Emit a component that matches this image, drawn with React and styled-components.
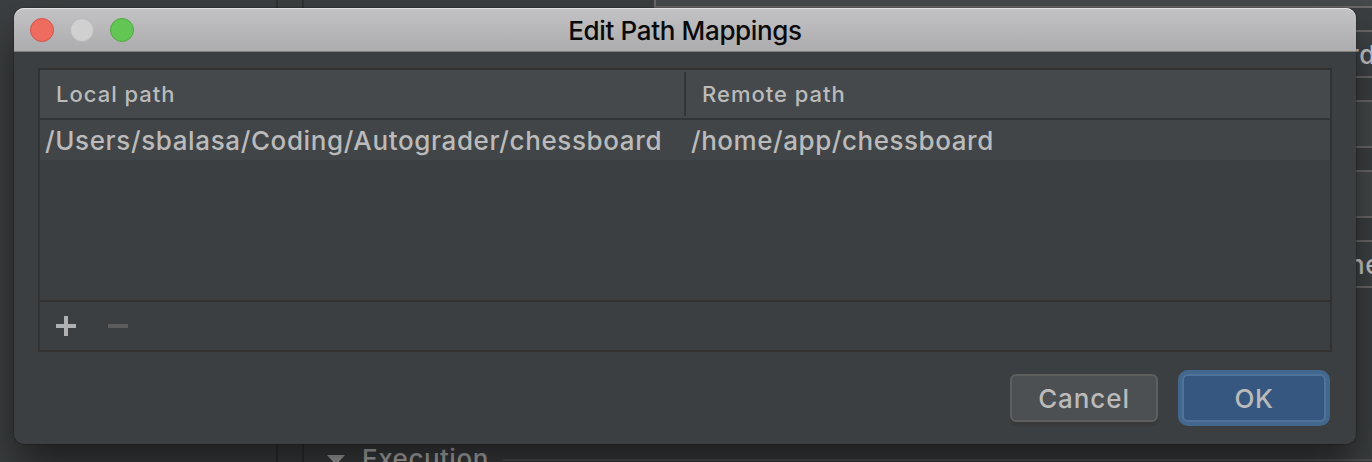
import React from "react";
import styled, { createGlobalStyle } from "styled-components";

const GlobalStyle = createGlobalStyle`
  * { box-sizing: border-box; }
  body { margin: 0; overflow: hidden; background: #3c3f41; font-family: Inter, "Liberation Sans", sans-serif; }
`;

const Screen = styled.div`
  position: relative;
  width: 1372px;
  height: 462px;
  overflow: hidden;
  background: #3c3f41;
`;

const Settings = styled.div`
  display: flex;
  height: 100%;
`;

const Sidebar = styled.div`
  width: 278px;
  border-right: 2px solid #2f3132;
`;

const Splitter = styled.div`
  width: 26px;
  border-right: 2px solid #2f3132;
`;

const Form = styled.div`
  flex: 1;
  min-width: 0;
  height: 502px;
  margin-top: -40px;
  display: flex;
  flex-direction: column;
`;

const Fields = styled.div`
  display: flex;
  flex-direction: column;
  gap: 22px;
  margin-left: 350px;
`;

const Field = styled.div`
  height: 48px;
  border: 2px solid #6a6868;
  border-right: 0;
  background: ${(p) => (p.$bright ? "#45494a" : "#3e4244")};
  color: #c8c8c8;
  font-size: 26px;
  font-weight: 450;
  line-height: 46px;
  letter-spacing: 0.6px;
  padding-left: ${(p) => p.$indent || 0}px;
  white-space: nowrap;
`;

const Section = styled.div`
  display: flex;
  align-items: center;
  height: 34px;
  margin: 154px 0 0 23px;
  color: #bbbbbb;
  font-size: 26px;
  font-weight: 450;
  line-height: 34px;
  letter-spacing: 0.5px;

  svg { margin: 2px 17px 0 0; }
`;

const Rule = styled.div`
  flex: 1;
  height: 2px;
  margin: 2px 0 0 14px;
  background: #515151;
`;

const Dialog = styled.div`
  position: absolute;
  left: 14px;
  top: 8px;
  width: 1342px;
  height: 436px;
  display: flex;
  flex-direction: column;
  border-radius: 10px;
  background: #3c3f41;
  box-shadow: 0 0 2px 0 rgba(0, 0, 0, 0.5), 0 26px 44px rgba(0, 0, 0, 0.5);
`;

const TitleBar = styled.div`
  display: grid;
  grid-template-columns: 1fr auto 1fr;
  align-items: center;
  height: 44px;
  padding: 0 16px;
  border-radius: 10px 10px 0 0;
  border-bottom: 1px solid #7f7f80;
  background: linear-gradient(#c3c2c4, #acabad);
  box-shadow: inset 0 1px 0 #e0e0e1;
`;

const Lights = styled.div`
  display: flex;
  gap: 16px;
`;

const Light = styled.span`
  width: 24px;
  height: 24px;
  border-radius: 50%;
  background: ${(p) => p.$fill};
  border: 1px solid ${(p) => p.$edge};
`;

const Title = styled.div`
  font-size: 26px;
  font-weight: 450;
  line-height: 41px;
  padding-top: 2px;
  letter-spacing: -0.35px;
  color: #0a0a0a;
`;

const Content = styled.div`
  flex: 1;
  display: flex;
  flex-direction: column;
  padding: 16px 24px 18px;
`;

const Table = styled.div`
  height: 284px;
  border: 2px solid #323232;
  display: flex;
  flex-direction: column;
`;

const HeaderRow = styled.div`
  display: flex;
  height: 50px;
  padding: 2px 0;
  border-bottom: 2px solid #323537;
  background: #45494b;
`;

const HeaderCell = styled.div`
  width: ${(p) => p.$width};
  border-right: ${(p) => (p.$divided ? "2px solid #323537" : "0")};
  padding-left: 16px;
  color: #bbbbbb;
  font-size: 22px;
  font-weight: 450;
  line-height: 45px;
  letter-spacing: 1px;
`;

const Row = styled.div`
  display: flex;
  height: 40px;
  background: #414547;
`;

const Cell = styled.div`
  width: ${(p) => p.$width};
  padding-left: 5px;
  color: #bbbbbb;
  font-size: 26px;
  font-weight: 450;
  line-height: 42px;
  letter-spacing: ${(p) => p.$track}px;
  white-space: nowrap;
`;

const ToolStrip = styled.div`
  display: flex;
  align-items: center;
  gap: 32px;
  height: 50px;
  margin-top: auto;
  padding-left: 16px;
  border-top: 2px solid #323232;
`;

const Actions = styled.div`
  display: flex;
  justify-content: flex-end;
  align-items: center;
  gap: 20px;
  margin: 18px 2px 0 0;
`;

const Button = styled.button`
  height: 48px;
  width: ${(p) => (p.$primary ? 144 : 148)}px;
  margin: ${(p) => (p.$primary ? 4 : 0)}px;
  padding: 0;
  border-radius: 6px;
  border: 2px solid ${(p) => (p.$primary ? "#4f7399" : "#5e6060")};
  background: ${(p) => (p.$primary ? "#365880" : "#4c5052")};
  box-shadow: ${(p) => (p.$primary ? "0 0 0 4px #43688f" : "0 4px 0 #37393a")};
  color: #bbbbbb;
  font-family: inherit;
  font-size: 26px;
  font-weight: 450;
  letter-spacing: ${(p) => p.$track}px;
`;

export default function App() {
  return (
    <>
      <GlobalStyle />
      <Screen>
        <Settings>
          <Sidebar />
          <Splitter />
          <Form>
            <Fields>
              <Field $bright />
              <Field $indent={693}>rd</Field>
              <Field $bright />
              <Field $bright />
              <Field $indent={693}>ne</Field>
            </Fields>
            <Section>
              <svg width="18" height="10" viewBox="0 0 18 10">
                <path d="M0 0H18L9 10Z" fill="#adadad" />
              </svg>
              Execution
              <Rule />
            </Section>
          </Form>
        </Settings>
        <Dialog>
          <TitleBar>
            <Lights>
              <Light $fill="#ed6b5f" $edge="#d5544a" />
              <Light $fill="#d1d0d1" $edge="#bab9ba" />
              <Light $fill="#62c654" $edge="#52a943" />
            </Lights>
            <Title>Edit Path Mappings</Title>
          </TitleBar>
          <Content>
            <Table>
              <HeaderRow>
                <HeaderCell $width="646px" $divided>Local path</HeaderCell>
                <HeaderCell $width="644px">Remote path</HeaderCell>
              </HeaderRow>
              <Row>
                <Cell $width="646px" $track={0.62}>/Users/sbalasa/Coding/Autograder/chessboard</Cell>
                <Cell $width="644px" $track={0.55}>/home/app/chessboard</Cell>
              </Row>
              <ToolStrip>
                <svg width="20" height="20" viewBox="0 0 20 20">
                  <path d="M8 0h4v8h8v4h-8v8H8v-8H0V8h8z" fill="#afb1b3" />
                </svg>
                <svg width="20" height="20" viewBox="0 0 20 20">
                  <path d="M0 8h20v4H0z" fill="#5c5c5c" />
                </svg>
              </ToolStrip>
            </Table>
            <Actions>
              <Button $track={0.9}>Cancel</Button>
              <Button $primary $track={0.7}>OK</Button>
            </Actions>
          </Content>
        </Dialog>
      </Screen>
    </>
  );
}
